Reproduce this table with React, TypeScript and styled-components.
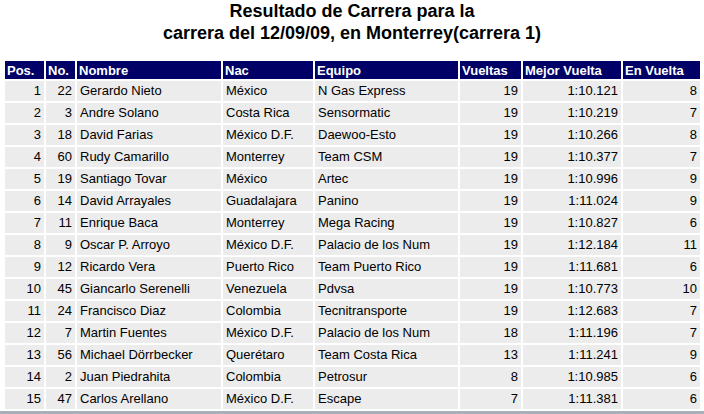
import React from "react";
import styled, { createGlobalStyle } from "styled-components";

const Global = createGlobalStyle`
  html, body { margin: 0; padding: 0; background: #ffffff; }
  body { font-family: "Liberation Sans", Arial, Helvetica, sans-serif; color: #000; }
`;

const Page = styled.div`
  width: 704px;
  height: 414px;
  overflow: hidden;
  display: flex;
  flex-direction: column;
`;

const Title = styled.h1`
  margin: 0 0 15px 0;
  font-size: 18px;
  line-height: 22px;
  font-weight: bold;
  text-align: center;
  color: #000;
`;

const TableWrap = styled.div`
  padding-left: 3px;
`;

const Table = styled.table`
  border-collapse: separate;
  border-spacing: 2px;
  table-layout: fixed;
  width: 699px;
  font-size: 13px;
`;

const HeadCell = styled.th`
  background: #000066;
  color: #ffffff;
  font-weight: bold;
  text-align: left;
  padding: 0 2px;
  height: 18px;
  line-height: 15px;
  white-space: nowrap;
  overflow: hidden;
`;

const Cell = styled.td<{ $num?: boolean }>`
  background: #ececec;
  color: #000;
  text-align: ${(p) => (p.$num ? "right" : "left")};
  padding: 0 3px;
  height: 20px;
  line-height: 16px;
  white-space: nowrap;
  overflow: hidden;
`;

const Footer = styled.div`
  flex: 1;
  background: #a9afb7;
`;

const cols = [39, 29, 144, 90, 143, 61, 98, 77];
const headers = ["Pos.", "No.", "Nombre", "Nac", "Equipo", "Vueltas", "Mejor Vuelta", "En Vuelta"];

type Row = [number, number, string, string, string, number, string, number];

const rows: Row[] = [
  [1, 22, "Gerardo Nieto", "México", "N Gas Express", 19, "1:10.121", 8],
  [2, 3, "Andre Solano", "Costa Rica", "Sensormatic", 19, "1:10.219", 7],
  [3, 18, "David Farias", "México D.F.", "Daewoo-Esto", 19, "1:10.266", 8],
  [4, 60, "Rudy Camarillo", "Monterrey", "Team CSM", 19, "1:10.377", 7],
  [5, 19, "Santiago Tovar", "México", "Artec", 19, "1:10.996", 9],
  [6, 14, "David Arrayales", "Guadalajara", "Panino", 19, "1:11.024", 9],
  [7, 11, "Enrique Baca", "Monterrey", "Mega Racing", 19, "1:10.827", 6],
  [8, 9, "Oscar P. Arroyo", "México D.F.", "Palacio de los Num", 19, "1:12.184", 11],
  [9, 12, "Ricardo Vera", "Puerto Rico", "Team Puerto Rico", 19, "1:11.681", 6],
  [10, 45, "Giancarlo Serenelli", "Venezuela", "Pdvsa", 19, "1:10.773", 10],
  [11, 24, "Francisco Diaz", "Colombia", "Tecnitransporte", 19, "1:12.683", 7],
  [12, 7, "Martin Fuentes", "México D.F.", "Palacio de los Num", 18, "1:11.196", 7],
  [13, 56, "Michael Dörrbecker", "Querétaro", "Team Costa Rica", 13, "1:11.241", 9],
  [14, 2, "Juan Piedrahita", "Colombia", "Petrosur", 8, "1:10.985", 6],
  [15, 47, "Carlos Arellano", "México D.F.", "Escape", 7, "1:11.381", 6],
];

const numCols = [true, true, false, false, false, true, true, true];

export default function App() {
  return (
    <Page>
      <Global />
      <Title>
        Resultado de Carrera para la
        <br />
        carrera del 12/09/09, en Monterrey(carrera 1)
      </Title>
      <TableWrap>
        <Table>
          <colgroup>
            {cols.map((w, i) => (
              <col key={i} style={{ width: w }} />
            ))}
          </colgroup>
          <thead>
            <tr>
              {headers.map((h) => (
                <HeadCell key={h}>{h}</HeadCell>
              ))}
            </tr>
          </thead>
          <tbody>
            {rows.map((r) => (
              <tr key={r[0]}>
                {r.map((v, i) => (
                  <Cell key={i} $num={numCols[i]}>
                    {v}
                  </Cell>
                ))}
              </tr>
            ))}
          </tbody>
        </Table>
      </TableWrap>
      <Footer />
    </Page>
  );
}
